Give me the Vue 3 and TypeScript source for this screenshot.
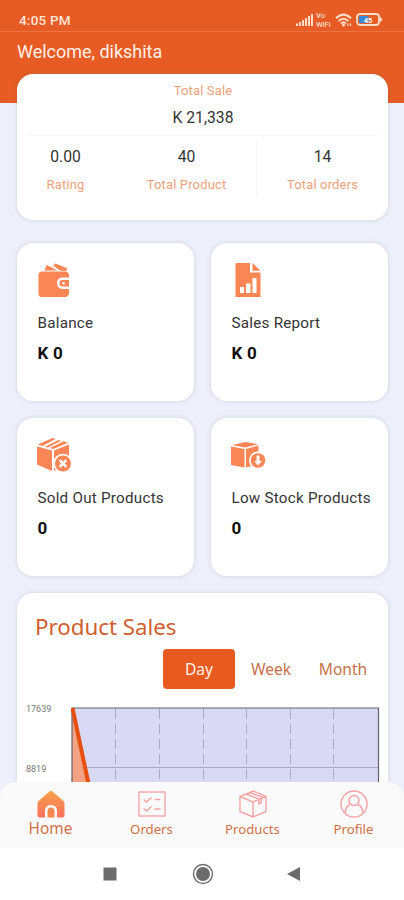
<script setup lang="ts">
import { ref } from 'vue'

interface Stat {
  value: string
  label: string
}
interface Tile {
  icon: 'wallet' | 'report' | 'soldout' | 'lowstock'
  label: string
  value: string
}

const stats: Stat[] = [
  { value: '0.00', label: 'Rating' },
  { value: '40', label: 'Total Product' },
  { value: '14', label: 'Total orders' },
]

const tiles: Tile[] = [
  { icon: 'wallet', label: 'Balance', value: 'K 0' },
  { icon: 'report', label: 'Sales Report', value: 'K 0' },
  { icon: 'soldout', label: 'Sold Out Products', value: '0' },
  { icon: 'lowstock', label: 'Low Stock Products', value: '0' },
]

const ranges = ['Day', 'Week', 'Month'] as const
const range = ref<(typeof ranges)[number]>('Day')

const gridX: number[] = [44, 88, 132, 175, 219, 262]
const tabs = ['Home', 'Orders', 'Products', 'Profile'] as const
const tab = ref<(typeof tabs)[number]>('Home')
</script>

<template>
  <div class="phone">
    <main class="content">
      <header class="top">
        <div class="status">
          <span class="time">4:05 PM</span>
          <div class="indicators">
            <svg class="signal" width="18" height="12" viewBox="0 0 18 12">
              <rect x="0" y="9.5" width="2" height="2.5" />
              <rect x="3" y="8" width="2" height="4" />
              <rect x="6" y="6" width="2" height="6" />
              <rect x="9" y="4" width="2" height="8" />
              <rect x="12" y="2" width="2" height="10" />
              <rect x="15" y="0" width="2" height="12" />
            </svg>
            <span class="vowifi"><span>Vo</span><span>WiFi</span></span>
            <svg class="wifi" width="18" height="14" viewBox="0 0 18 14">
              <g fill="none" stroke="#fbdccb" stroke-width="2">
                <path d="M1 5.2Q8.500-2 16 5.200" />
                <path d="M3.600 8Q8.500 3.400 13.400 8" />
                <path d="M6 10.500Q8.500 8 11 10.500" />
              </g>
              <circle cx="8.500" cy="12" r="1.500" fill="#fbdccb" />
              <path d="M13 13V10.500M15.500 13V10.500" stroke="#fbdccb" stroke-width="1.200" />
            </svg>
            <svg class="battery" width="27" height="13" viewBox="0 0 27 13">
              <rect x="1" y="1" width="22" height="11" rx="3" fill="#e75c24" stroke="#fbdccb" stroke-width="1.800" />
              <path d="M24 3.500L26.500 6.500L24 9.500Z" fill="#fbdccb" />
              <rect x="3" y="3" width="9.500" height="7" rx="1" fill="#3689dd" />
              <text x="12" y="9.500" text-anchor="middle" class="level">45</text>
            </svg>
          </div>
        </div>
        <h1 class="welcome">Welcome, dikshita</h1>
      </header>

      <section class="card summary">
        <p class="caption">Total Sale</p>
        <p class="amount">K 21,338</p>
        <div class="stats">
          <div v-for="s in stats" :key="s.label" class="stat">
            <span class="stat-value">{{ s.value }}</span>
            <span class="caption">{{ s.label }}</span>
          </div>
        </div>
      </section>

      <section class="tiles">
        <article v-for="t in tiles" :key="t.label" class="card tile">
          <svg class="tile-icon" width="36" height="36" viewBox="0 0 36 36">
            <g v-if="t.icon === 'wallet'" fill="#fa8555">
              <path d="M7.500 8.500L9.500 3L15 5.500L20 8.500ZM16 3.500L18.500 1.500L30.500 6.500L29 9L23 8.500Z" />
              <path d="M5 9.500H28Q31.500 9.500 32 13V15.500H25Q20 16 20 21T25 27H32V31Q31.500 35 28 35H5Q1.500 35 1.500 31.500V13Q1.500 9.500 5 9.500Z" />
              <path d="M25.500 18H32V24.500H25.500Q22.500 24.500 22.500 21.200T25.500 18Z" />
              <circle cx="26.500" cy="21.200" r="1.300" fill="#fff" />
            </g>
            <g v-else-if="t.icon === 'report'">
              <path fill="#fa8555" d="M5.500 1H19V10.500H29.500V35H4.500V2Q4.500 1 5.500 1ZM21.500 1L29.500 8.700H21.500Z" />
              <path fill="#fff" d="M9 25H13V31H9ZM15 21.500H19.500V31H15ZM21.500 16H25.500V31H21.500Z" />
            </g>
            <g v-else-if="t.icon === 'soldout'">
              <path fill="#fa8555" d="M0 9.500L15 13.500V34L0 27.500ZM17 13.500L32 7.500V27L17 34ZM1 7.500L15.500 1L18.500 2L5.500 9ZM8 9.700L21.500 3L24 3.700L11 10.500ZM13 11L26.500 4.200L31 5.800L16.500 12Z" />
              <circle cx="26" cy="26.500" r="9.800" fill="#fff" />
              <circle cx="26" cy="26.500" r="8" fill="#fa8555" />
              <path d="M22.700 23.200L29.300 29.800M29.300 23.200L22.700 29.800" stroke="#fff" stroke-width="2.600" />
            </g>
            <g v-else>
              <path fill="#fa8555" d="M0 9.500L13.500 12V30.500L0 28ZM15 12L27.500 8.500V27L15 30.500ZM1 8L14.500 5L27 7.200L14.200 10.500Z" />
              <circle cx="27" cy="23.500" r="9" fill="#fff" />
              <circle cx="27" cy="23.500" r="7.300" fill="#fa8555" />
              <path d="M25.500 18.500H28.500V24H31L27 28.500L23 24H25.500Z" fill="#fff" />
            </g>
          </svg>
          <p class="tile-label">{{ t.label }}</p>
          <p class="tile-value">{{ t.value }}</p>
        </article>
      </section>

      <section class="card sales">
        <h2 class="sales-title">Product Sales</h2>
        <div class="ranges">
          <button
            v-for="r in ranges"
            :key="r"
            class="range"
            :class="{ active: range === r }"
            @click="range = r"
          >{{ r }}</button>
        </div>
        <div class="chart">
          <div class="axis">
            <span>17639</span>
            <span>8819</span>
          </div>
          <svg class="plot" width="309" height="122" viewBox="0 0 309 122">
            <rect x="1" y="1" width="307" height="121" fill="#d9d9f3" />
            <g stroke="#aaaacb" stroke-width="1" stroke-dasharray="10 5">
              <line v-for="x in gridX" :key="x" :x1="x + 0.5" y1="2" :x2="x + 0.5" y2="122" />
            </g>
            <path d="M1 60.500H308" stroke="#aaaacb" />
            <path d="M1 1L31 122H1Z" fill="#f3a283" />
            <path d="M1 122V1H307.500V122" fill="none" stroke="#626270" stroke-width="1.200" />
            <path d="M1.500 1L31.500 143" fill="none" stroke="#e6500f" stroke-width="4" />
          </svg>
        </div>
      </section>
    </main>

    <nav class="tabs">
      <button v-for="t in tabs" :key="t" class="tab" :class="{ current: tab === t }" @click="tab = t">
        <svg class="tab-icon" width="28" height="28" viewBox="0 0 28 28">
          <defs>
            <linearGradient id="roof" x1="0" y1="0" x2="0" y2="1">
              <stop offset="0" stop-color="#f7a047" />
              <stop offset="1" stop-color="#fb7160" />
            </linearGradient>
          </defs>
          <g v-if="t === 'Home'">
            <path fill="url(#roof)" d="M12.500 1.500Q14 .2 15.500 1.500L26.500 11Q27.500 12 27.500 13.500V25Q27.500 27.500 25 27.500H20V20.500Q19.500 15 14 15T8 20.500V27.500H3Q.5 27.500.5 25V13.500Q.5 12 1.500 11Z" />
            <path fill="#f58a50" d="M10.500 27.500V20.500Q11 17.500 14 17.500T17.500 20.500V27.500Z" />
          </g>
          <g v-else-if="t === 'Orders'" class="line">
            <rect x="1" y="2" width="26" height="24" />
            <path d="M5.500 9.500L8.500 12L13.500 7.500M5.500 18.500L8.500 21L13.500 16.500M16.500 9.500H22.500M16.500 19H22.500" />
          </g>
          <g v-else-if="t === 'Products'" class="line">
            <path d="M1 6.500L14.500 1L27 6.500V21.500L14 27L1 21.500ZM1 6.500L14 12L27 6.500M14 12V27M7.500 4L20 9.200V14L22.500 12V8M11 2.500L24 7.700" />
          </g>
          <g v-else class="line">
            <circle cx="14" cy="14" r="13" />
            <circle cx="14" cy="10.500" r="5" />
            <path d="M5 23Q5.500 16.500 10 14.500M18 14.500Q22.500 16.500 23 23" />
          </g>
        </svg>
        <span class="tab-label">{{ t }}</span>
      </button>
    </nav>

    <footer class="system">
      <svg width="14" height="14" viewBox="0 0 14 14"><rect x=".5" y=".5" width="13" height="13" fill="#6c6c6c" /></svg>
      <svg width="22" height="22" viewBox="0 0 22 22">
        <circle cx="11" cy="11" r="9.500" fill="none" stroke="#6c6c6c" stroke-width="1.400" />
        <circle cx="11" cy="11" r="7" fill="#6c6c6c" />
      </svg>
      <svg width="14" height="16" viewBox="0 0 14 16"><path d="M0 8L13 1V15Z" fill="#6c6c6c" /></svg>
    </footer>
  </div>
</template>

<style>
body {
  margin: 0;
}
</style>

<style scoped>
.phone {
  display: flex;
  flex-direction: column;
  width: 404px;
  height: 900px;
  overflow: hidden;
  background: #fff;
  font-family: Roboto, sans-serif;
}
p, h1, h2 {
  margin: 0;
  font-weight: 400;
}
button {
  border: 0;
  padding: 0;
  background: none;
  font: inherit;
}
.content {
  flex: none;
  box-sizing: border-box;
  height: 798px;
  overflow: hidden;
  background: #edf0fa;
}
.top {
  height: 103px;
  background: #e75c24;
}
.status {
  box-sizing: border-box;
  display: flex;
  justify-content: space-between;
  height: 32px;
  padding: 12px 21px 0 19px;
  border-bottom: 1px solid #ed7440;
}
.time {
  line-height: 17px;
  font-size: 13.5px;
  font-weight: 500;
  letter-spacing: 0.2px;
  color: #fde5d8;
}
.indicators {
  display: flex;
  align-items: flex-start;
  padding-top: 1px;
}
.signal {
  margin: 1px 2px 0 0;
  fill: #fbdccb;
}
.vowifi {
  display: flex;
  flex-direction: column;
  width: 17px;
  margin-top: -2px;
  font-size: 7.5px;
  font-weight: 500;
  line-height: 9px;
  color: #fbdccb;
}
.wifi {
  margin: 0 3px 0 2px;
}
.level {
  font: 700 7.5px Roboto, sans-serif;
  fill: #fff;
}
.welcome {
  padding: 9px 0 0 17px;
  font-size: 18px;
  line-height: 22px;
  letter-spacing: -0.02px;
  color: #fff0e8;
}
.card {
  background: #fff;
  border-radius: 16px;
  box-shadow: 0 0 4px rgba(80, 85, 110, 0.2);
}
.summary {
  position: relative;
  box-sizing: border-box;
  width: 371px;
  height: 146px;
  margin: -29px 0 0 17px;
  padding: 8px 11px 0 12px;
  text-align: center;
}
.caption {
  font-size: 13px;
  line-height: 18px;
  letter-spacing: 0.15px;
  color: #eea17c;
}
.amount {
  padding: 8px 0 7px;
  font-size: 15.7px;
  line-height: 20px;
  color: #343434;
}
.stats {
  display: grid;
  grid-template-columns: 89px 139px 1fr;
  border-top: 1px solid #f5f5f5;
  padding-top: 6px;
}
.stat {
  display: flex;
  flex-direction: column;
  gap: 9px;
  height: 51px;
  padding-top: 5px;
}
.stat:first-child {
  padding-right: 16px;
}
.stat:nth-child(2) {
  padding-right: 1px;
  border-right: 1px solid #f5f5f5;
}
.stat:nth-child(3) {
  padding-left: 11px;
}
.stat-value {
  font-size: 15.7px;
  line-height: 20px;
  color: #343434;
}
.tiles {
  display: grid;
  grid-template-columns: 177px 177px;
  grid-auto-rows: 158px;
  gap: 17px;
  padding: 23px 0 0 17px;
}
.tile {
  box-sizing: border-box;
  padding: 19px 0 0 20.5px;
}
.tile-icon {
  display: block;
  margin-left: -0.5px;
}
.tile-label {
  margin-top: 15px;
  white-space: nowrap;
  font-size: 15.2px;
  line-height: 20px;
  letter-spacing: 0.25px;
  color: #343434;
}
.tile-value {
  margin-top: 9px;
  font-size: 17px;
  line-height: 22px;
  font-weight: 700;
  letter-spacing: 0.2px;
  color: #111;
}
.sales {
  width: 371px;
  height: 240px;
  margin: 17px 0 0 17px;
  font-family: "Noto Sans", sans-serif;
}
.sales-title {
  padding: 18px 0 0 18px;
  font-size: 22.3px;
  line-height: 32px;
  color: #d0602e;
}
.ranges {
  display: flex;
  justify-content: flex-end;
  padding: 6px 9px 0 0;
}
.range {
  width: 72px;
  height: 40px;
  border-radius: 4px;
  font-size: 15.6px;
  color: #c87048;
}
.range.active {
  background: #e75a20;
  color: #fff0e5;
}
.chart {
  display: flex;
  padding: 18px 0 0 9px;
}
.axis {
  display: flex;
  flex-direction: column;
  gap: 48px;
  width: 45px;
  margin-top: -4px;
  font: 9px/12px Roboto, sans-serif;
  color: #777;
}
.plot {
  display: block;
}
.tabs {
  position: relative;
  flex: none;
  display: grid;
  grid-template-columns: repeat(4, 101px);
  height: 66px;
  margin-top: -16px;
  border-radius: 16px 16px 0 0;
  background: #fafafa;
  font-family: "Noto Sans", sans-serif;
}
.tab {
  display: flex;
  flex-direction: column;
  align-items: center;
  padding-top: 8px;
}
.tab-label {
  margin-top: 2px;
  font-size: 13.2px;
  line-height: 18px;
  color: #d07148;
}
.current .tab-label {
  font-size: 15.4px;
}
.line {
  fill: none;
  stroke: #f3a3a3;
  stroke-width: 1.4;
}
.system {
  flex: 1;
  display: flex;
  align-items: center;
  gap: 75px;
  padding-left: 103px;
  background: #fff;
}
.system svg:last-child {
  margin-left: -2px;
}
</style>
